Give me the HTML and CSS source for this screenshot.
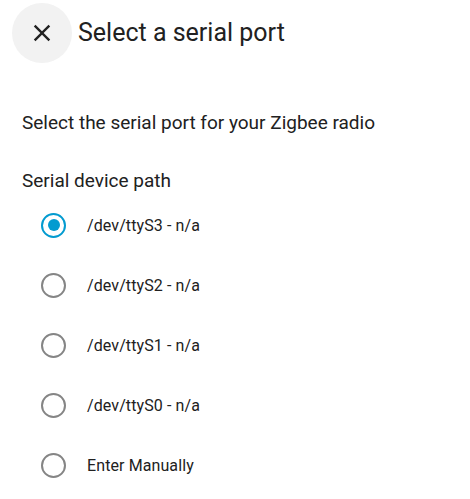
FILE: index.html
```html
<!DOCTYPE html>
<html>
<head>
<meta charset="utf-8">
<link rel="stylesheet" href="styles.css">
</head>
<body>
<div class="dialog">
  <header class="header">
    <button class="close" aria-label="Close">
      <svg viewBox="0 0 24 24" width="28" height="28"><path d="M19 6.41L17.59 5 12 10.59 6.41 5 5 6.41 10.59 12 5 17.59 6.41 19 12 13.41 17.59 19 19 17.59 13.41 12z" fill="#212121"/></svg>
    </button>
    <h2 class="title">Select a serial port</h2>
  </header>
  <p class="desc">Select the serial port for your Zigbee radio</p>
  <div class="field-label">Serial device path</div>
  <div class="options">
    <label class="option"><span class="radio checked"><span class="dot"></span></span><span class="text">/dev/ttyS3 - n/a</span></label>
    <label class="option"><span class="radio"></span><span class="text">/dev/ttyS2 - n/a</span></label>
    <label class="option"><span class="radio"></span><span class="text">/dev/ttyS1 - n/a</span></label>
    <label class="option"><span class="radio"></span><span class="text">/dev/ttyS0 - n/a</span></label>
    <label class="option"><span class="radio"></span><span class="text">Enter Manually</span></label>
  </div>
</div>
</body>
</html>
```
FILE: styles.css
```css
html, body {
  margin: 0;
  padding: 0;
  background: #ffffff;
}
body {
  font-family: Roboto, "Noto Sans", sans-serif;
  color: #212121;
}
.dialog {
  width: 470px;
  height: 499px;
  overflow: hidden;
}
.header {
  display: flex;
  align-items: center;
  padding: 3px 0 0 12px;
  height: 60px;
}
.close {
  width: 60px;
  height: 60px;
  border-radius: 50%;
  border: none;
  background: #f2f2f2;
  padding: 0;
  display: flex;
  align-items: center;
  justify-content: center;
  flex: none;
}
.title {
  margin: -2px 0 0 6px;
  font-size: 25px;
  font-weight: 400;
  color: #212121;
}
.desc {
  margin: 46px 0 0 22px;
  font-size: 19px;
  line-height: 28px;
}
.field-label {
  margin: 30px 0 0 22px;
  font-size: 19px;
  line-height: 28px;
}
.options {
  display: flex;
  flex-direction: column;
  margin-top: 0;
}
.option {
  display: flex;
  align-items: center;
  height: 60px;
  padding-left: 41px;
}
.radio {
  box-sizing: border-box;
  width: 25px;
  height: 25px;
  border-radius: 50%;
  border: 2.5px solid #858585;
  display: flex;
  align-items: center;
  justify-content: center;
  flex: none;
}
.radio.checked {
  border-color: #039bd0;
}
.dot {
  width: 12px;
  height: 12px;
  border-radius: 50%;
  background: #039bd0;
}
.text {
  margin-left: 21px;
  font-size: 16px;
  letter-spacing: 0.1px;
  color: #212121;
}
```
